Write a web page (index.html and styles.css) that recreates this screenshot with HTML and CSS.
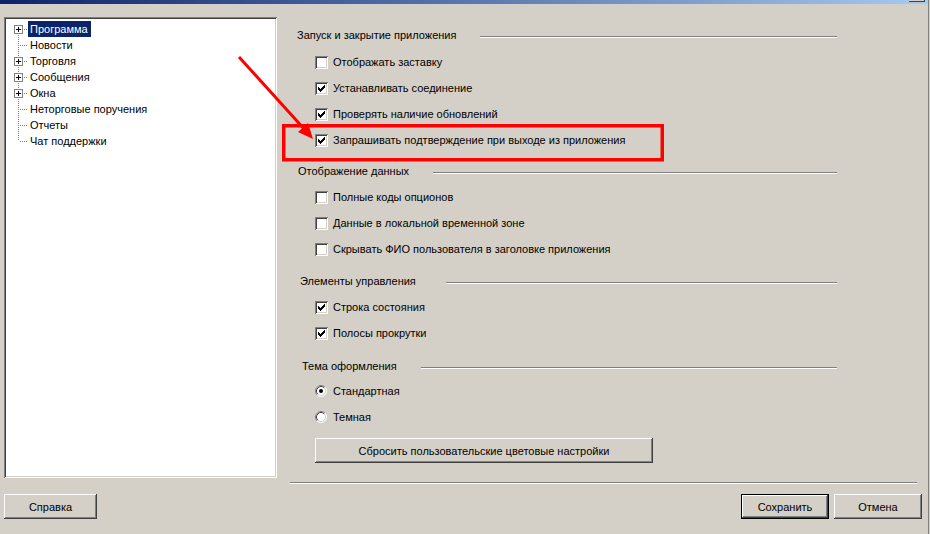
FILE: index.html
```html
<!DOCTYPE html>
<html lang="ru">
<head>
    <meta charset="UTF-8">
    <meta name="viewport" content="width=device-width, initial-scale=1.0">
    <title>Настройки</title>
    <link rel="stylesheet" href="styles.css">
</head>
<body>
    <div class="window">
        <div class="titlebar"><span class="title-btn"></span></div>

        <div class="main">
            <div class="tree">
                <div class="tree-row first"><span class="branch"><span class="expander"></span></span><span class="tree-label selected">Программа</span></div>
                <div class="tree-row"><span class="branch"></span><span class="tree-label">Новости</span></div>
                <div class="tree-row"><span class="branch"><span class="expander"></span></span><span class="tree-label">Торговля</span></div>
                <div class="tree-row"><span class="branch"><span class="expander"></span></span><span class="tree-label">Сообщения</span></div>
                <div class="tree-row"><span class="branch"><span class="expander"></span></span><span class="tree-label">Окна</span></div>
                <div class="tree-row"><span class="branch"></span><span class="tree-label">Неторговые поручения</span></div>
                <div class="tree-row"><span class="branch"></span><span class="tree-label">Отчеты</span></div>
                <div class="tree-row last"><span class="branch"></span><span class="tree-label">Чат поддержки</span></div>
            </div>

            <div class="options">
                <div class="group first">
                    <div class="group-title"><span>Запуск и закрытие приложения</span><span class="rule"></span></div>
                    <div class="option"><span class="checkbox"></span>Отображать заставку</div>
                    <div class="option"><span class="checkbox checked"><svg width="13" height="13" viewBox="0 0 13 13"><path d="M3.5 5V8M4.5 6V9M5.5 7V10M6.5 6V9M7.5 5V8M8.5 4V7M9.5 3V6" stroke="#000" shape-rendering="crispEdges"/></svg></span>Устанавливать соединение</div>
                    <div class="option"><span class="checkbox checked"><svg width="13" height="13" viewBox="0 0 13 13"><path d="M3.5 5V8M4.5 6V9M5.5 7V10M6.5 6V9M7.5 5V8M8.5 4V7M9.5 3V6" stroke="#000" shape-rendering="crispEdges"/></svg></span>Проверять наличие обновлений</div>
                    <div class="option"><span class="checkbox checked"><svg width="13" height="13" viewBox="0 0 13 13"><path d="M3.5 5V8M4.5 6V9M5.5 7V10M6.5 6V9M7.5 5V8M8.5 4V7M9.5 3V6" stroke="#000" shape-rendering="crispEdges"/></svg></span>Запрашивать подтверждение при выходе из приложения</div>
                </div>

                <div class="group g2">
                    <div class="group-title"><span>Отображение данных</span><span class="rule"></span></div>
                    <div class="option"><span class="checkbox"></span>Полные коды опционов</div>
                    <div class="option"><span class="checkbox"></span>Данные в локальной временной зоне</div>
                    <div class="option"><span class="checkbox"></span>Скрывать ФИО пользователя в заголовке приложения</div>
                </div>

                <div class="group g3">
                    <div class="group-title"><span>Элементы управления</span><span class="rule"></span></div>
                    <div class="option"><span class="checkbox checked"><svg width="13" height="13" viewBox="0 0 13 13"><path d="M3.5 5V8M4.5 6V9M5.5 7V10M6.5 6V9M7.5 5V8M8.5 4V7M9.5 3V6" stroke="#000" shape-rendering="crispEdges"/></svg></span>Строка состояния</div>
                    <div class="option"><span class="checkbox checked"><svg width="13" height="13" viewBox="0 0 13 13"><path d="M3.5 5V8M4.5 6V9M5.5 7V10M6.5 6V9M7.5 5V8M8.5 4V7M9.5 3V6" stroke="#000" shape-rendering="crispEdges"/></svg></span>Полосы прокрутки</div>
                </div>

                <div class="group g4">
                    <div class="group-title"><span>Тема оформления</span><span class="rule"></span></div>
                    <div class="option">
                        <svg class="radio" width="12" height="12" viewBox="0 0 12 12">
                            <circle cx="6" cy="6" r="5" fill="#fff"/>
                            <path d="M2.11 9.89A5.5 5.5 0 0 1 9.89 2.11" fill="none" stroke="#808080"/>
                            <path d="M9.89 2.11A5.5 5.5 0 0 1 2.11 9.89" fill="none" stroke="#fff"/>
                            <path d="M2.82 9.18A4.5 4.5 0 0 1 9.18 2.82" fill="none" stroke="#404040"/>
                            <path d="M9.18 2.82A4.5 4.5 0 0 1 2.82 9.18" fill="none" stroke="#d4d0c8"/>
                            <circle cx="6" cy="6" r="2" fill="#000"/>
                        </svg>Стандартная
                    </div>
                    <div class="option">
                        <svg class="radio" width="12" height="12" viewBox="0 0 12 12">
                            <circle cx="6" cy="6" r="5" fill="#fff"/>
                            <path d="M2.11 9.89A5.5 5.5 0 0 1 9.89 2.11" fill="none" stroke="#808080"/>
                            <path d="M9.89 2.11A5.5 5.5 0 0 1 2.11 9.89" fill="none" stroke="#fff"/>
                            <path d="M2.82 9.18A4.5 4.5 0 0 1 9.18 2.82" fill="none" stroke="#404040"/>
                            <path d="M9.18 2.82A4.5 4.5 0 0 1 2.82 9.18" fill="none" stroke="#d4d0c8"/>
                        </svg>Темная
                    </div>
                </div>

                <button class="btn btn-reset">Сбросить пользовательские цветовые настройки</button>
                <div class="separator"></div>
            </div>
        </div>

        <div class="footer">
            <button class="btn btn-help">Справка</button>
            <span class="spacer"></span>
            <button class="btn btn-default">Сохранить</button>
            <button class="btn">Отмена</button>
        </div>
    </div>

    <!-- пометки поверх скриншота -->
    <svg class="annotation" width="930" height="534" viewBox="0 0 930 534">
        <rect x="283.75" y="125.75" width="378.5" height="34" fill="none" stroke="#ff0000" stroke-width="3.5"/>
        <line x1="239" y1="57" x2="306" y2="131" stroke="#ff0000" stroke-width="3"/>
        <polygon points="313,139 308,123 298,132" fill="#ff0000"/>
    </svg>
</body>
</html>
```

FILE: styles.css
```css
body { margin: 0; background: #d4d0c8; font-family: "Liberation Sans", Arial, sans-serif; font-size: 11px; color: #000; }
.window { width: 929px; height: 534px; box-sizing: border-box; border-right: 1px solid #808080; display: flex; flex-direction: column; }

.titlebar { height: 4px; background: linear-gradient(to right, #0a246a, #a6caf0); display: flex; justify-content: flex-end; padding-right: 3px; }
.title-btn { width: 15px; height: 1px; background: #d4d0c8; border-bottom: 1px solid #404040; border-right: 1px solid #404040; }

.main { display: flex; align-items: flex-start; padding: 13px 0 0 4px; }

/* дерево разделов */
.tree { width: 273px; height: 461px; box-sizing: border-box; background: #fff; padding-top: 4px;
    box-shadow: inset 1px 1px #808080, inset -1px -1px #fff, inset 2px 2px #404040, inset -2px -2px #d4d0c8; }
.tree-row { display: flex; height: 16px; line-height: 16px; padding-left: 2px; }
.branch { position: relative; width: 22px; flex: none; }
.branch::before { content: ""; position: absolute; left: 12px; top: 0; bottom: 0; width: 1px;
    background: linear-gradient(to bottom, #808080 50%, transparent 50%); background-size: 1px 2px; }
.branch::after { content: ""; position: absolute; left: 13px; top: 8px; width: 9px; height: 1px;
    background: linear-gradient(to right, transparent 50%, #808080 50%); background-size: 2px 1px; }
.tree-row.first .branch::before { top: 8px; }
.tree-row.last .branch::before { bottom: 8px; }
.expander { position: absolute; left: 8px; top: 4px; width: 9px; height: 9px; box-sizing: border-box; border: 1px solid #808080; background: #fff; z-index: 1; }
.expander::before { content: ""; position: absolute; left: 1px; top: 3px; width: 5px; height: 1px; background: #000; }
.expander::after { content: ""; position: absolute; left: 3px; top: 1px; width: 1px; height: 5px; background: #000; }
.tree-label { padding: 0 2px; white-space: nowrap; }
.tree-label.selected { background: #0a246a; color: #fff; padding-right: 3px; }

/* правая часть */
.options { width: 627px; margin-left: 13px; }
.group { margin-top: 11px; padding-right: 80px; }
.group.first { margin-top: 10px; }
.group-title { display: flex; height: 16px; line-height: 16px; padding-left: 7px; margin-bottom: 5px; }
.group.first .group-title { margin-bottom: 6px; }
.group.g2 { margin-top: 10px; }
.group-title .rule { flex: 1; height: 0; border-top: 1px solid #808080; border-bottom: 1px solid #fff; margin: 9px 0 0 24px; }
.g2 .group-title { padding-left: 8px; }
.g3 .group-title { padding-left: 10px; }
.g3 .group-title .rule { margin-left: 30px; }
.g4 .group-title { padding-left: 12px; margin-bottom: 4px; }
.group.g4 { margin-top: 12px; }

.option { display: flex; align-items: center; height: 26px; padding-left: 25px; white-space: nowrap; }
.checkbox { width: 13px; height: 13px; flex: none; margin-right: 5px; background: #fff;
    box-shadow: inset 1px 1px #808080, inset -1px -1px #fff, inset 2px 2px #404040, inset -2px -2px #d4d0c8; }
.checkbox svg { display: block; }
.radio { flex: none; margin-right: 6px; }

.btn { font: inherit; color: #000; background: #d4d0c8; border: none; padding: 0; height: 25px; width: 88px; box-sizing: border-box;
    box-shadow: inset -1px -1px #404040, inset 1px 1px #fff, inset -2px -2px #808080, inset 2px 2px #d4d0c8; }
.btn-reset { display: block; width: 338px; margin: 8px 0 0 25px; }
.btn-help { width: 93px; }
.btn-default { border: 1px solid #000; }

.separator { margin-top: 19px; height: 0; border-top: 1px solid #808080; border-bottom: 1px solid #fff; }

.footer { display: flex; gap: 5px; padding: 10px 6px 0 4px; }
.spacer { flex: 1; }

.annotation { position: absolute; left: 0; top: 0; pointer-events: none; }
```
